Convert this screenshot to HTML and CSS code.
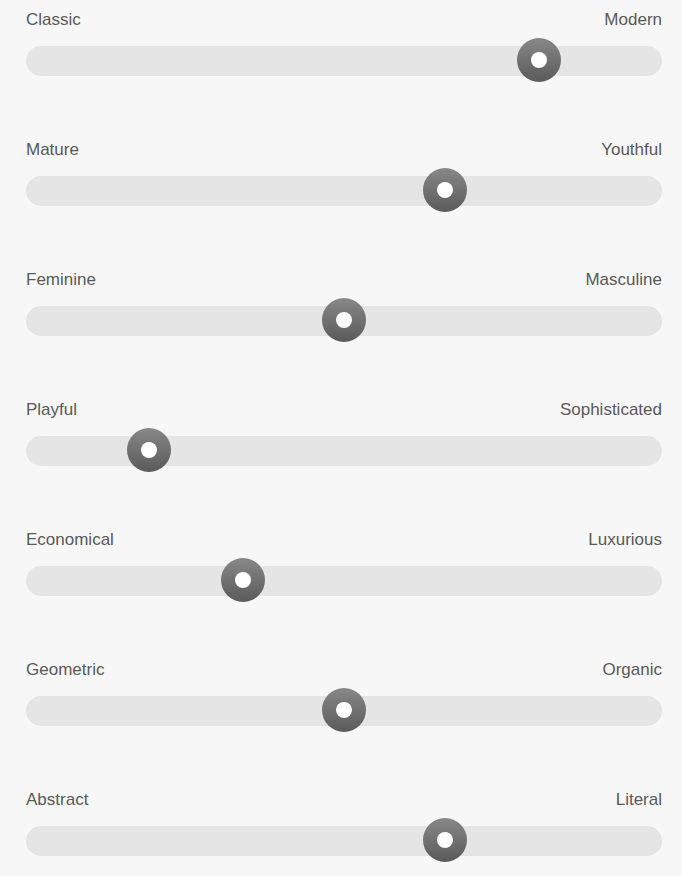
FILE: index.html
```html
<!DOCTYPE html>
<html lang="en">
<head>
    <meta charset="UTF-8">
    <meta name="viewport" content="width=device-width, initial-scale=1.0">
    <title>Brand Personality</title>
    <link rel="stylesheet" href="styles.css">
</head>
<body>
    <div class="sliders">
        <div class="slider">
            <div class="labels"><span>Classic</span><span>Modern</span></div>
            <div class="track"><div class="thumb" style="--v: 0.83"></div></div>
        </div>
        <div class="slider">
            <div class="labels"><span>Mature</span><span>Youthful</span></div>
            <div class="track"><div class="thumb" style="--v: 0.67"></div></div>
        </div>
        <div class="slider">
            <div class="labels"><span>Feminine</span><span>Masculine</span></div>
            <div class="track"><div class="thumb" style="--v: 0.5"></div></div>
        </div>
        <div class="slider">
            <div class="labels"><span>Playful</span><span>Sophisticated</span></div>
            <div class="track"><div class="thumb" style="--v: 0.17"></div></div>
        </div>
        <div class="slider">
            <div class="labels"><span>Economical</span><span>Luxurious</span></div>
            <div class="track"><div class="thumb" style="--v: 0.33"></div></div>
        </div>
        <div class="slider">
            <div class="labels"><span>Geometric</span><span>Organic</span></div>
            <div class="track"><div class="thumb" style="--v: 0.5"></div></div>
        </div>
        <div class="slider">
            <div class="labels"><span>Abstract</span><span>Literal</span></div>
            <div class="track"><div class="thumb" style="--v: 0.67"></div></div>
        </div>
    </div>
</body>
</html>
```

FILE: styles.css
```css
body {
    margin: 0;
    background: #f7f7f7;
    font-family: "Liberation Sans", Arial, sans-serif;
    color: #595959;
}
.sliders {
    padding: 0 20px 0 26px;
}
.slider {
    padding-top: 9px;
    height: 121px;
}
.labels {
    display: flex;
    justify-content: space-between;
    font-size: 17px;
    line-height: 22px;
}
.track {
    position: relative;
    margin-top: 15px;
    height: 30px;
    border-radius: 15px;
    background: #e5e5e5;
}
.thumb {
    position: absolute;
    top: -8px;
    left: calc((100% - 44px) * var(--v));
    width: 44px;
    height: 44px;
    border-radius: 50%;
    background: linear-gradient(#888, #5a5a5a);
}
.thumb::after {
    content: "";
    position: absolute;
    top: 14px;
    left: 14px;
    width: 16px;
    height: 16px;
    border-radius: 50%;
    background: #fff;
}
```
